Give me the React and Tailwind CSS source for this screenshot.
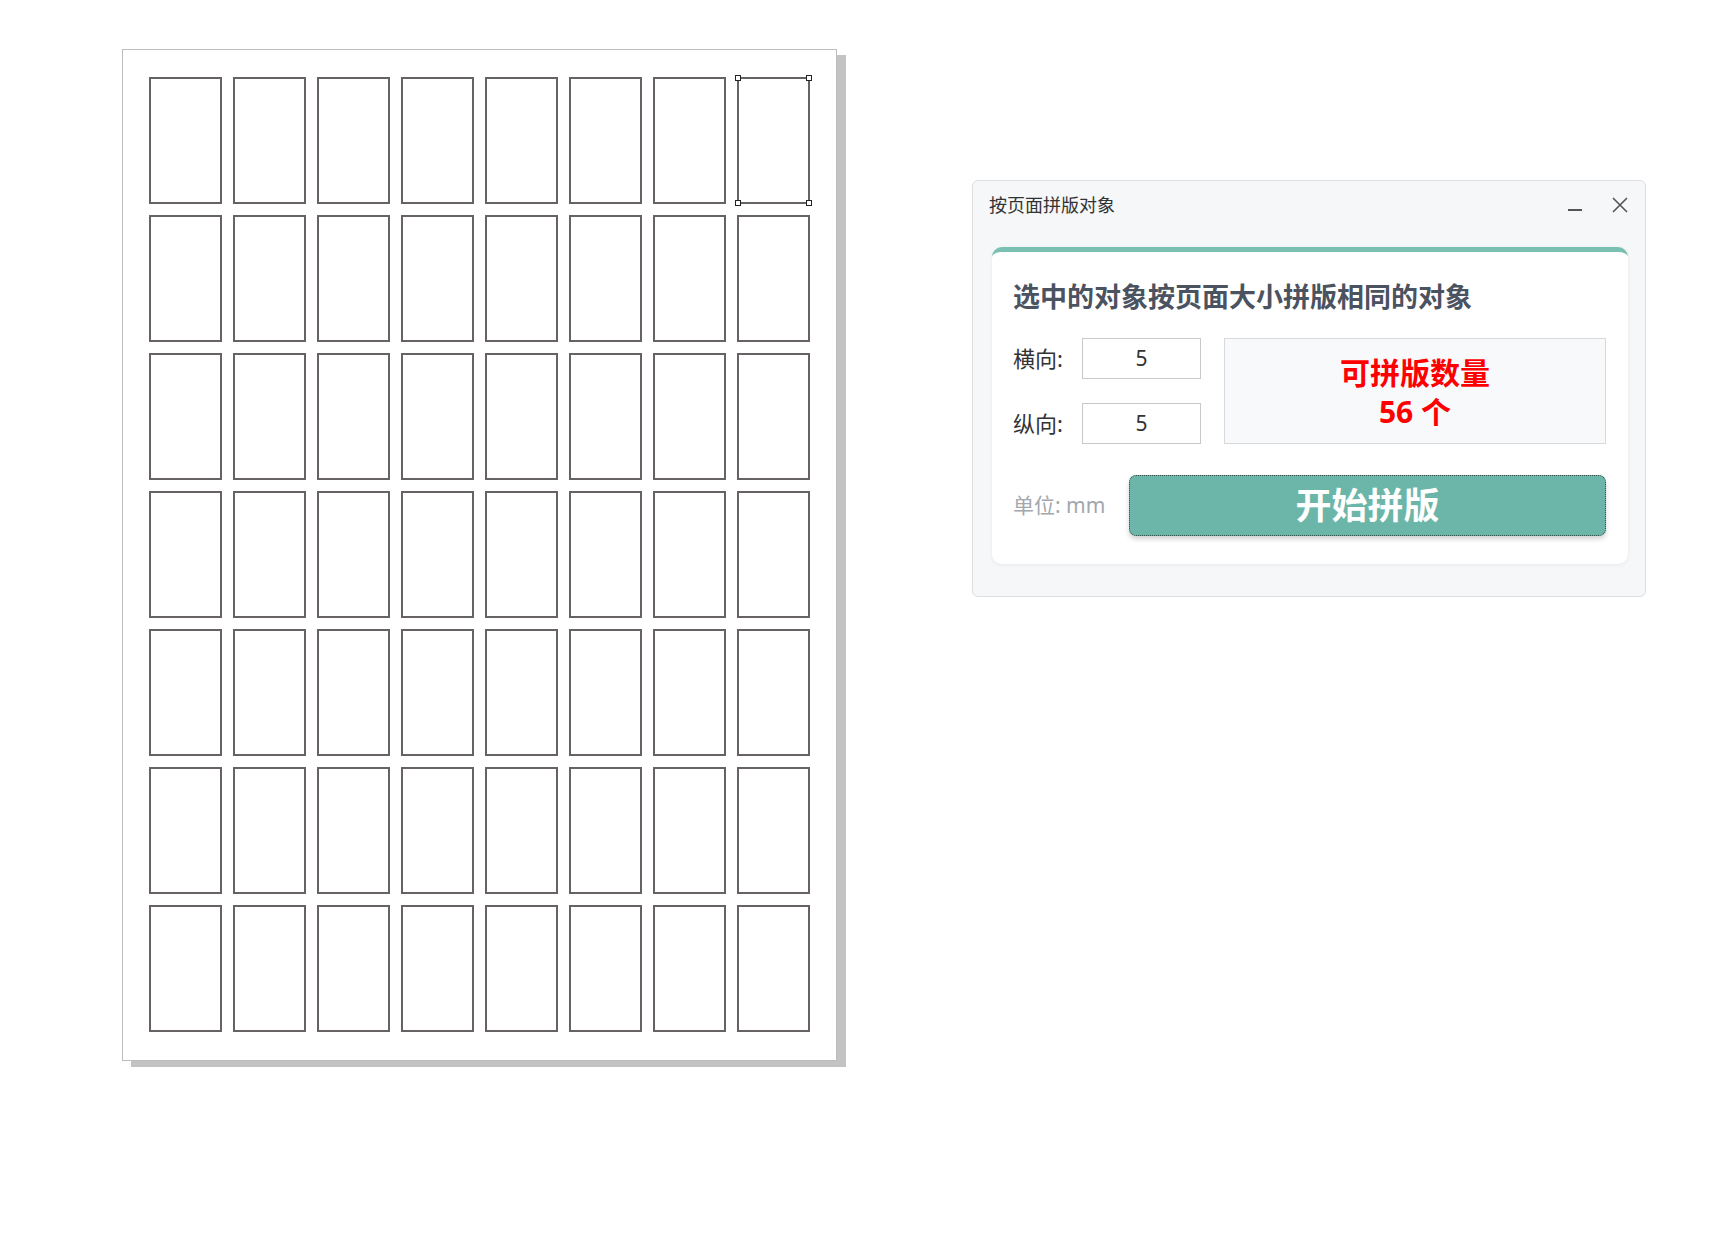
import React from "react";

const cjk = { fontFamily: '"Noto Sans", "Noto Sans CJK SC", sans-serif' };

function Handle({ pos }) {
  return (
    <span
      className={`absolute w-[6px] h-[6px] border border-[#222] bg-white ${pos}`}
    ></span>
  );
}

function Sheet() {
  const cells = Array.from({ length: 56 }, (_, i) => i);
  return (
    <div className="w-[715px] h-[1012px] shrink-0 border border-[#bdbdbd] bg-white shadow-[9px_6px_0_#c3c3c3] pt-[27px] pl-[26px]">
      <div className="grid grid-cols-[repeat(8,73px)] grid-rows-[repeat(7,127px)] gap-x-[11px] gap-y-[11px]">
        {cells.map((i) => (
          <div
            key={i}
            className="relative border-2 border-[#676363] bg-white"
          >
            {/* selection handles on the picked object */}
            {i === 7 && (
              <>
                <Handle pos="-left-[4px] -top-[4px]" />
                <Handle pos="-right-[4px] -top-[4px]" />
                <Handle pos="-left-[4px] -bottom-[4px]" />
                <Handle pos="-right-[4px] -bottom-[4px]" />
              </>
            )}
          </div>
        ))}
      </div>
    </div>
  );
}

function Dialog() {
  return (
    <div
      className="ml-[135px] mt-[131px] w-[674px] h-[417px] shrink-0 rounded-[6px] border border-[#dcdee2] bg-[#f6f7f9]"
      style={cjk}
    >
      {/* title bar */}
      <div className="flex items-center justify-between h-[48px] pl-[16px] pr-[17px]">
        <span className="text-[18px] text-[#333] leading-none">按页面拼版对象</span>
        <div className="flex items-center gap-[30px]">
          <svg width="14" height="14" viewBox="0 0 14 14" className="mt-[10px]">
            <path d="M0 7h14" stroke="#555" strokeWidth="2" />
          </svg>
          <svg width="16" height="16" viewBox="0 0 16 16">
            <path d="M1 1L15 15M15 1L1 15" stroke="#555" strokeWidth="1.6" />
          </svg>
        </div>
      </div>

      {/* card */}
      <div className="mt-[18px] ml-[19px] w-[636px] h-[317px] rounded-[10px] border-t-[5px] border-[#79bfb2] bg-white shadow-[0_1px_4px_rgba(0,0,0,0.06)] pt-[28px] pl-[21px] pr-[22px]">
        <h2 className="text-[27px] leading-[34px] font-bold text-[#4b5260]">
          选中的对象按页面大小拼版相同的对象
        </h2>

        <div className="flex mt-[24px]">
          <div className="flex flex-col gap-[24px]">
            <div className="flex items-center h-[41px]">
              <span className="w-[69px] text-[22px] text-[#333]">横向:</span>
              <div className="w-[119px] h-[41px] border border-[#c9c9c9] bg-white flex items-center justify-center text-[21px] text-[#333]">
                5
              </div>
            </div>
            <div className="flex items-center h-[41px]">
              <span className="w-[69px] text-[22px] text-[#333]">纵向:</span>
              <div className="w-[119px] h-[41px] border border-[#c9c9c9] bg-white flex items-center justify-center text-[21px] text-[#333]">
                5
              </div>
            </div>
          </div>
          <div className="ml-[23px] flex-1 h-[106px] border border-[#d7d9dc] bg-[#f8f9fa] flex flex-col items-center justify-center pt-[2px]">
            <span className="text-[30px] leading-[39px] font-bold text-[#ff0000]">可拼版数量</span>
            <span className="text-[30px] leading-[39px] font-bold text-[#ff0000]">56 个</span>
          </div>
        </div>

        <div className="flex items-center mt-[31px]">
          <span className="text-[21px] text-[#a3a7ae]">单位: mm</span>
          <button className="ml-auto w-[477px] h-[61px] rounded-[7px] bg-[#6cb6a9] border border-dotted border-[#2e4a45] shadow-[0_3px_5px_rgba(0,0,0,0.18)] text-white text-[36px] font-bold leading-none">
            开始拼版
          </button>
        </div>
      </div>
    </div>
  );
}

export default function App() {
  return (
    <div className="w-[1734px] h-[1257px] bg-white flex items-start pt-[49px] pl-[122px]">
      <Sheet />
      <Dialog />
    </div>
  );
}
